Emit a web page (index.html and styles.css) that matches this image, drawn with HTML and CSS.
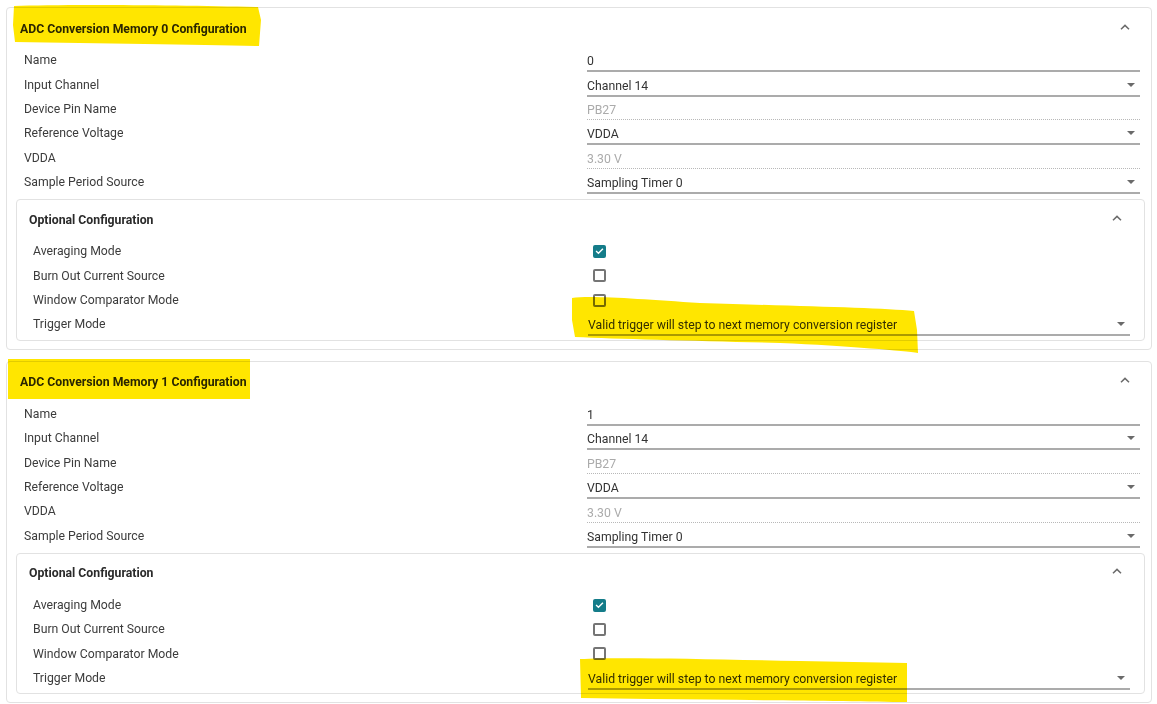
FILE: index.html
```html
<!DOCTYPE html>
<html>
<head>
<meta charset="utf-8">
<link rel="stylesheet" href="styles.css">
</head>
<body>
<div class="page">
  <section class="card">
    <header class="card-head">
      <h2 class="card-title">ADC Conversion Memory 0 Configuration</h2>
      <svg class="chev" width="10" height="6" viewBox="0 0 10 6"><path d="M1 5.2 L5 1.4 L9 5.2" fill="none" stroke="#6b6b6b" stroke-width="1.5"/></svg>
    </header>
    <div class="rows">
      <div class="row"><span class="label">Name</span><div class="field">0</div></div>
      <div class="row"><span class="label">Input Channel</span><div class="field select"><span>Channel 14</span><i class="caret"></i></div></div>
      <div class="row"><span class="label">Device Pin Name</span><div class="field ro">PB27</div></div>
      <div class="row"><span class="label">Reference Voltage</span><div class="field select"><span>VDDA</span><i class="caret"></i></div></div>
      <div class="row"><span class="label">VDDA</span><div class="field ro">3.30 V</div></div>
      <div class="row"><span class="label">Sample Period Source</span><div class="field select"><span>Sampling Timer 0</span><i class="caret"></i></div></div>
    </div>
    <section class="sub">
      <header class="sub-head">
        <h3 class="sub-title">Optional Configuration</h3>
        <svg class="chev" width="10" height="6" viewBox="0 0 10 6"><path d="M1 5.2 L5 1.4 L9 5.2" fill="none" stroke="#6b6b6b" stroke-width="1.5"/></svg>
      </header>
      <div class="row in"><span class="label">Averaging Mode</span><div class="cbx"><span class="box on"><svg width="10" height="8" viewBox="0 0 10 8"><path d="M1.2 4 L3.8 6.4 L8.8 1.4" fill="none" stroke="#fff" stroke-width="1.6"/></svg></span></div></div>
      <div class="row in"><span class="label">Burn Out Current Source</span><div class="cbx"><span class="box"></span></div></div>
      <div class="row in"><span class="label">Window Comparator Mode</span><div class="cbx"><span class="box"></span></div></div>
      <div class="row in"><span class="label">Trigger Mode</span><div class="field select"><span>Valid trigger will step to next memory conversion register</span><i class="caret"></i></div></div>
    </section>
  </section>

  <section class="card">
    <header class="card-head">
      <h2 class="card-title">ADC Conversion Memory 1 Configuration</h2>
      <svg class="chev" width="10" height="6" viewBox="0 0 10 6"><path d="M1 5.2 L5 1.4 L9 5.2" fill="none" stroke="#6b6b6b" stroke-width="1.5"/></svg>
    </header>
    <div class="rows">
      <div class="row"><span class="label">Name</span><div class="field">1</div></div>
      <div class="row"><span class="label">Input Channel</span><div class="field select"><span>Channel 14</span><i class="caret"></i></div></div>
      <div class="row"><span class="label">Device Pin Name</span><div class="field ro">PB27</div></div>
      <div class="row"><span class="label">Reference Voltage</span><div class="field select"><span>VDDA</span><i class="caret"></i></div></div>
      <div class="row"><span class="label">VDDA</span><div class="field ro">3.30 V</div></div>
      <div class="row"><span class="label">Sample Period Source</span><div class="field select"><span>Sampling Timer 0</span><i class="caret"></i></div></div>
    </div>
    <section class="sub">
      <header class="sub-head">
        <h3 class="sub-title">Optional Configuration</h3>
        <svg class="chev" width="10" height="6" viewBox="0 0 10 6"><path d="M1 5.2 L5 1.4 L9 5.2" fill="none" stroke="#6b6b6b" stroke-width="1.5"/></svg>
      </header>
      <div class="row in"><span class="label">Averaging Mode</span><div class="cbx"><span class="box on"><svg width="10" height="8" viewBox="0 0 10 8"><path d="M1.2 4 L3.8 6.4 L8.8 1.4" fill="none" stroke="#fff" stroke-width="1.6"/></svg></span></div></div>
      <div class="row in"><span class="label">Burn Out Current Source</span><div class="cbx"><span class="box"></span></div></div>
      <div class="row in"><span class="label">Window Comparator Mode</span><div class="cbx"><span class="box"></span></div></div>
      <div class="row in"><span class="label">Trigger Mode</span><div class="field select"><span>Valid trigger will step to next memory conversion register</span><i class="caret"></i></div></div>
    </section>
  </section>

  <svg class="marks" width="1157" height="704" viewBox="0 0 1157 704">
    <path d="M14 6 C60 4 180 5 258 7 L261 20 L259 46 C200 45 100 43 15 42 L13 25 Z" />
    <path d="M572 298 C590 295 640 299 700 303 C800 306 880 308 914 311 L917 330 L918 353 C905 351 850 346 780 343 C700 341 620 339 575 337 L572 320 Z" />
    <path d="M8 359 L250 359 L250 399 L8 399 Z" />
    <path d="M580 659 C620 657 700 659 800 661 L907 663 L907 702 C850 701 750 700 650 699 L581 698 Z" />
  </svg>
</div>
</body>
</html>
```

FILE: styles.css
```css
* { box-sizing: border-box; }
html, body { margin: 0; padding: 0; background: #fff; }
body {
  font-family: Roboto, "Liberation Sans", Arial, sans-serif;
  font-size: 12.25px;
  color: #3a3a3a;
}
.page {
  position: relative;
  width: 1157px;
  height: 704px;
  padding: 7px 5px 0 6px;
  display: flex;
  flex-direction: column;
  gap: 11px;
  overflow: hidden;
}
.card {
  border: 1px solid #e2e2e2;
  border-radius: 4px;
  padding: 0 0 8px 0;
}
.card-head {
  height: 40px;
  display: flex;
  align-items: center;
  justify-content: space-between;
  padding: 1px 21px 0 13px;
}
.card-title, .sub-title {
  margin: 0;
  font-size: 12.25px;
  font-weight: 700;
  color: #2a2a2a;
}
.chev { display: block; margin-top: -4px; }
.rows { display: flex; flex-direction: column; }
.row {
  height: 24.4px;
  display: flex;
  align-items: center;
  padding: 0 11px 0 17px;
}
.label {
  width: 563px;
  flex: none;
  color: #3c3c3c;
}
.field {
  flex: 1;
  display: flex;
  align-items: center;
  justify-content: space-between;
  height: 19px;
  margin-top: 5px;
  padding-bottom: 1px;
  border-bottom: 2px solid #ababab;
  color: #333;
  line-height: 16px;
}
.field.ro {
  color: #ababab;
  border-bottom: 1px dotted #b8b8b8;
  height: 18px;
}
.caret {
  display: block;
  width: 0;
  height: 0;
  border-left: 4px solid transparent;
  border-right: 4px solid transparent;
  border-top: 4px solid #6a6a6a;
  margin-right: 5px;
  margin-top: -2px;
}
.sub {
  margin: 5px 6px 0 9px;
  border: 1px solid #e2e2e2;
  border-radius: 4px;
  padding-bottom: 3px;
}
.sub-head {
  height: 39px;
  display: flex;
  align-items: center;
  justify-content: space-between;
  padding: 0 22px 0 12px;
}
.row.in {
  height: 24.3px;
  padding: 0 14px 0 16px;
}
.row.in .label { width: 555px; }
.cbx {
  flex: 1;
  display: flex;
  align-items: center;
  padding-left: 5px;
}
.box {
  width: 13px;
  height: 13px;
  border: 2px solid #757575;
  border-radius: 2px;
  display: flex;
  align-items: center;
  justify-content: center;
}
.box.on {
  background: #147c89;
  border-color: #147c89;
}
.marks {
  position: absolute;
  left: 0;
  top: 0;
  pointer-events: none;
  mix-blend-mode: multiply;
}
.marks path { fill: #ffe600; }
```
